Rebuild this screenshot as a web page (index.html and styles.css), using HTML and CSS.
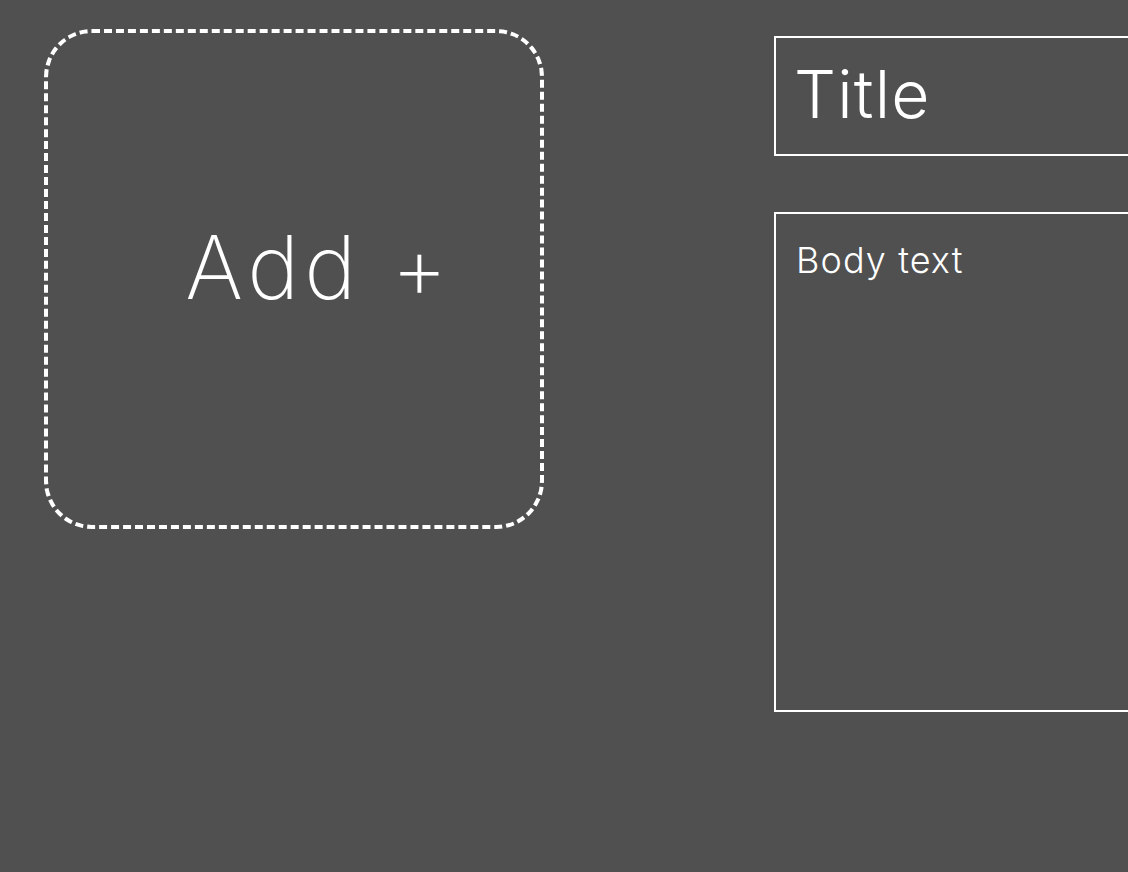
FILE: index.html
```html
<!DOCTYPE html>
<html lang="en">
<head>
    <meta charset="UTF-8">
    <meta name="viewport" content="width=device-width, initial-scale=1.0">
    <title>Notes</title>
    <link rel="stylesheet" href="styles.css">
</head>
<body>
    <div class="page">
        <div class="add-card" id="addCard">
            <span class="add-label">Add +</span>
        </div>
        <div class="editor">
            <div class="title-field">Title</div>
            <div class="body-field">Body text</div>
        </div>
    </div>
</body>
</html>
```
FILE: styles.css
```css
body {
    margin: 0;
    background-color: #505050;
    color: #fff;
    font-family: Inter, "Noto Sans", sans-serif;
    font-weight: 300;
    overflow: hidden;
    height: 100vh;
}

.page {
    display: flex;
    align-items: flex-start;
    padding: 29px 0 0 44px;
}

.add-card {
    box-sizing: border-box;
    width: 500px;
    height: 500px;
    border: 4px dashed #fff;
    border-radius: 48px;
    display: flex;
    justify-content: center;
    align-items: center;
    padding: 0 0 24px 50px;
    cursor: pointer;
    flex-shrink: 0;
}

.add-label {
    font-size: 88px;
    font-weight: 200;
    letter-spacing: 5px;
    line-height: 1;
}

.editor {
    flex: 1;
    margin: 7px 0 0 230px;
    display: flex;
    flex-direction: column;
    gap: 56px;
}

.title-field {
    box-sizing: border-box;
    height: 120px;
    border: 2px solid #fff;
    border-right: none;
    padding: 17px 18px;
    font-size: 66px;
    letter-spacing: 1.2px;
    line-height: 1.2;
}

.body-field {
    box-sizing: border-box;
    height: 500px;
    border: 2px solid #fff;
    border-right: none;
    padding: 25px 20px;
    font-size: 36px;
    letter-spacing: 1.1px;
    line-height: 1.2;
}
```
